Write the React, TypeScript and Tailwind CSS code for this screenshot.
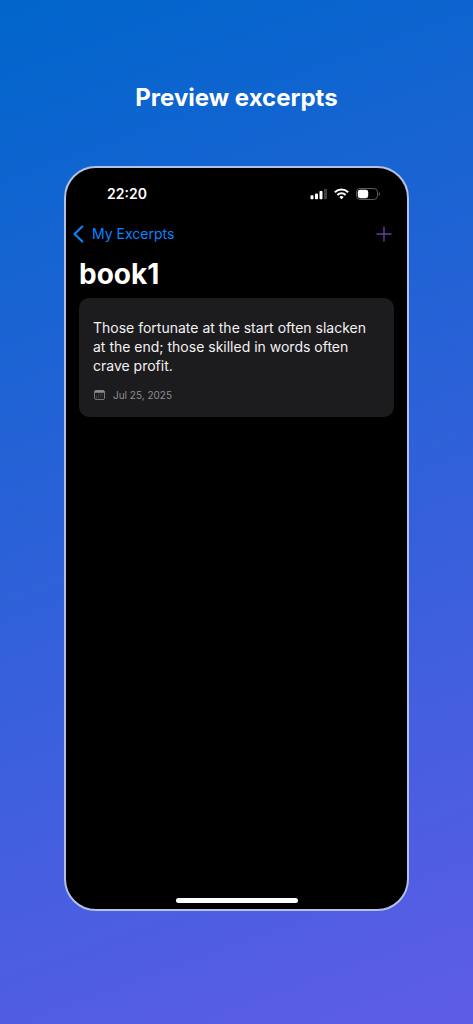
import React from 'react';

interface Excerpt {
  id: number;
  text: string;
  date: string;
}

const excerpts: Excerpt[] = [
  {
    id: 1,
    text: 'Those fortunate at the start often slacken at the end; those skilled in words often crave profit.',
    date: 'Jul 25, 2025',
  },
];

const StatusBar: React.FC = () => (
  <div className="flex items-center justify-between pl-[41px] pr-[27px] h-[52px] text-white">
    <span className="text-sm leading-5 font-semibold">22:20</span>
    <div className="flex items-center gap-[7px]">
      <svg className="w-[17px] h-3" viewBox="0 0 17 12" fill="currentColor">
        <rect x="0.5" y="7.2" width="3" height="4" rx="0.8" />
        <rect x="5" y="5.4" width="3" height="5.8" rx="0.8" />
        <rect x="9.5" y="3" width="3" height="8.2" rx="0.8" />
        <rect x="14" y="0.8" width="3" height="10.4" rx="0.8" opacity="0.25" />
      </svg>
      <svg className="w-[15px] h-3" viewBox="0 0 15 12" fill="none" stroke="currentColor" strokeWidth="2.1">
        <path d="M0.9 4.2a9.4 9.4 0 0 1 13.2 0" />
        <path d="M3.4 6.9a5.9 5.9 0 0 1 8.2 0" />
        <path d="M7.5 11.3 5.3 9.1a3.2 3.2 0 0 1 4.4 0z" fill="currentColor" stroke="none" />
      </svg>
      <svg className="w-6 h-3" viewBox="0 0 24 12" fill="none">
        <rect x="0.5" y="0.5" width="21" height="11" rx="3.6" stroke="#5c5c5e" />
        <rect x="1.8" y="1.8" width="10.4" height="8.4" rx="2.4" fill="#fff" />
        <path d="M22.8 4v4c.8-.3 1.2-1.1 1.2-2s-.4-1.7-1.2-2z" fill="#5c5c5e" />
      </svg>
    </div>
  </div>
);

const NavBar: React.FC = () => (
  <nav className="flex items-center justify-between pl-[7px] pr-[15px] h-7">
    <a href="#excerpts" className="flex items-center gap-2 text-[#0a84ff] text-sm leading-5">
      <svg className="w-[11px] h-[18px]" viewBox="0 0 11 18" fill="none" stroke="currentColor" strokeWidth="2.1" strokeLinecap="round" strokeLinejoin="round">
        <path d="M9.3 1.5 1.5 9l7.8 7.5" />
      </svg>
      My Excerpts
    </a>
    <button type="button" aria-label="Add excerpt" className="text-[#6b3d96]">
      <svg className="w-4 h-4" viewBox="0 0 16 16" fill="none" stroke="currentColor" strokeWidth="1.4" strokeLinecap="round">
        <path d="M8 1v14M1 8h14" />
      </svg>
    </button>
  </nav>
);

const ExcerptCard: React.FC<{ excerpt: Excerpt }> = ({ excerpt }) => (
  <article className="bg-[#1c1c1e] rounded-[10px] px-[14px] pt-5 pb-[14px]">
    <p className="text-sm leading-[19px] text-[#f2f2f2]">{excerpt.text}</p>
    <div className="flex items-center gap-2 mt-3 text-[#8e8e93] text-[10px] leading-4">
      <svg className="w-3 h-[10px]" viewBox="-1 0 12 10" fill="none">
        <rect x="0.5" y="0.5" width="10" height="9" rx="1.5" stroke="currentColor" strokeWidth="0.8" />
        <path d="M0.5 2.7V2A1.5 1.5 0 0 1 2 0.5h7A1.5 1.5 0 0 1 10.5 2v.7z" fill="currentColor" />
        <path d="M4.3 4.2h4.800M2 6h7M2 7.8h4.800" stroke="currentColor" strokeWidth="0.9" strokeDasharray="1.1 1.1" opacity="0.6" />
      </svg>
      <time dateTime="2025-07-25">{excerpt.date}</time>
    </div>
  </article>
);

const App: React.FC = () => {
  return (
    <div className="min-h-screen flex flex-col px-16 pt-20 pb-[113px] bg-[linear-gradient(160deg,#0066cc,#5e5ce6)] font-['Inter',sans-serif]">
      <h1 className="text-center text-white text-2xl leading-9 font-bold">Preview excerpts</h1>
      <div className="flex-1 flex flex-col mt-[50px] bg-black border-2 border-[#b4c0e4] rounded-[32px]">
        <StatusBar />
        <NavBar />
        <main className="flex-1 px-[13px] pt-2">
          <h2 className="text-white text-[28px] leading-9 font-bold">book1</h2>
          <div className="mt-1.5">
            {excerpts.map((excerpt) => (
              <ExcerptCard key={excerpt.id} excerpt={excerpt} />
            ))}
          </div>
        </main>
        <div className="w-[122px] h-[5px] mx-auto mb-1.5 bg-white rounded-full" />
      </div>
    </div>
  );
};

export default App;
